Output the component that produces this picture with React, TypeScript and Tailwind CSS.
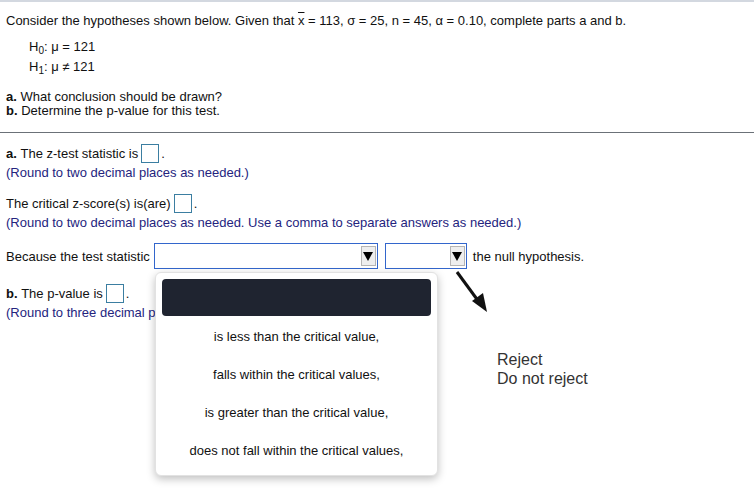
import React from 'react';

const AnswerBox: React.FC = () => (
  <span className="inline-block w-[18px] h-[19px] border border-[#3b7ea1] ml-[3px] mr-[2px]" />
);

const SelectBox: React.FC<{ width: string }> = ({ width }) => (
  <div className={`${width} h-[26px] border border-[#3366cc] bg-white flex items-center justify-end pr-[1px]`}>
    <div className="w-[15px] h-[20px] bg-[#eeeeee] border border-[#b5b5b5] flex items-center justify-center">
      <svg width="10" height="10" viewBox="0 0 10 10">
        <polygon points="0,1 10,1 5,10" fill="#000" />
      </svg>
    </div>
  </div>
);

const options = [
  'is less than the critical value,',
  'falls within the critical values,',
  'is greater than the critical value,',
  'does not fall within the critical values,',
];

const App: React.FC = () => (
  <div className="relative w-[754px] h-[501px] bg-white overflow-hidden text-[13px] text-[#111] font-['Liberation_Sans',Arial,sans-serif] leading-[15px]">
    <div className="border-t-2 border-[#d3d8e0] px-[6px] pt-[11px]">
      <p>
        Consider the hypotheses shown below. Given that <span className="overline">x</span> = 113, σ = 25, n = 45, α = 0.10,
        complete parts a and b.
      </p>
      <div className="pl-[23px] pt-[11px] flex flex-col gap-[5px]">
        <p>
          H<sub className="text-[10px]">0</sub>: μ = 121
        </p>
        <p>
          H<sub className="text-[10px]">1</sub>: μ ≠ 121
        </p>
      </div>
      <p className="pt-[16px] leading-[14px]">
        <b>a.</b> What conclusion should be drawn?
      </p>
      <p className="leading-[14px]">
        <b>b.</b> Determine the p-value for this test.
      </p>
    </div>

    <div className="mt-[14px] border-t border-[#6b7178]" />

    <div className="px-[6px] pt-[11px]">
      <div className="flex items-center h-[19px]">
        <b>a.</b>&nbsp;The z-test statistic is
        <AnswerBox />.
      </div>
      <p className="pt-[2px] text-[#24247e]">(Round to two decimal places as needed.)</p>
      <div className="flex items-center h-[19px] mt-[14px]">
        The critical z-score(s) is(are)
        <AnswerBox />.
      </div>
      <p className="pt-[2px] text-[#24247e]">
        (Round to two decimal places as needed. Use a comma to separate answers as needed.)
      </p>

      <div className="flex items-center mt-[13px]">
        <span className="pr-[4px]">Because the test statistic</span>
        <SelectBox width="w-[224px]" />
        <span className="w-[7px]" />
        <SelectBox width="w-[82px]" />
        <span className="pl-[6px]">the null hypothesis.</span>
      </div>

      <div className="flex items-center h-[19px] mt-[15px]">
        <b>b.</b>&nbsp;The p-value is
        <AnswerBox />.
      </div>
      <p className="pt-[2px] text-[#24247e]">(Round to three decimal places as needed.)</p>
    </div>

    {/* open dropdown list */}
    <div className="absolute left-[155px] top-[272px] w-[283px] h-[204px] bg-white rounded-[6px] border border-[#e2e2e2] shadow-[0_3px_8px_rgba(0,0,0,0.25)] p-[6px]">
      <div className="h-[37px] rounded-[4px] bg-[#1f2430]" />
      <div className="flex flex-col items-center pt-[13px] gap-[23px]">
        {options.map((o) => (
          <span key={o}>{o}</span>
        ))}
      </div>
    </div>

    <svg className="absolute left-[452px] top-[268px]" width="40" height="48" viewBox="0 0 40 48">
      <line x1="5" y1="4" x2="27" y2="34" stroke="#111" strokeWidth="3" />
      <polygon points="35,44 20,33 31,25" fill="#111" />
    </svg>

    <div className="absolute left-[497px] top-[350px] text-[16px] text-[#333] leading-[19px]">
      <p>Reject</p>
      <p>Do not reject</p>
    </div>
  </div>
);

export default App;
